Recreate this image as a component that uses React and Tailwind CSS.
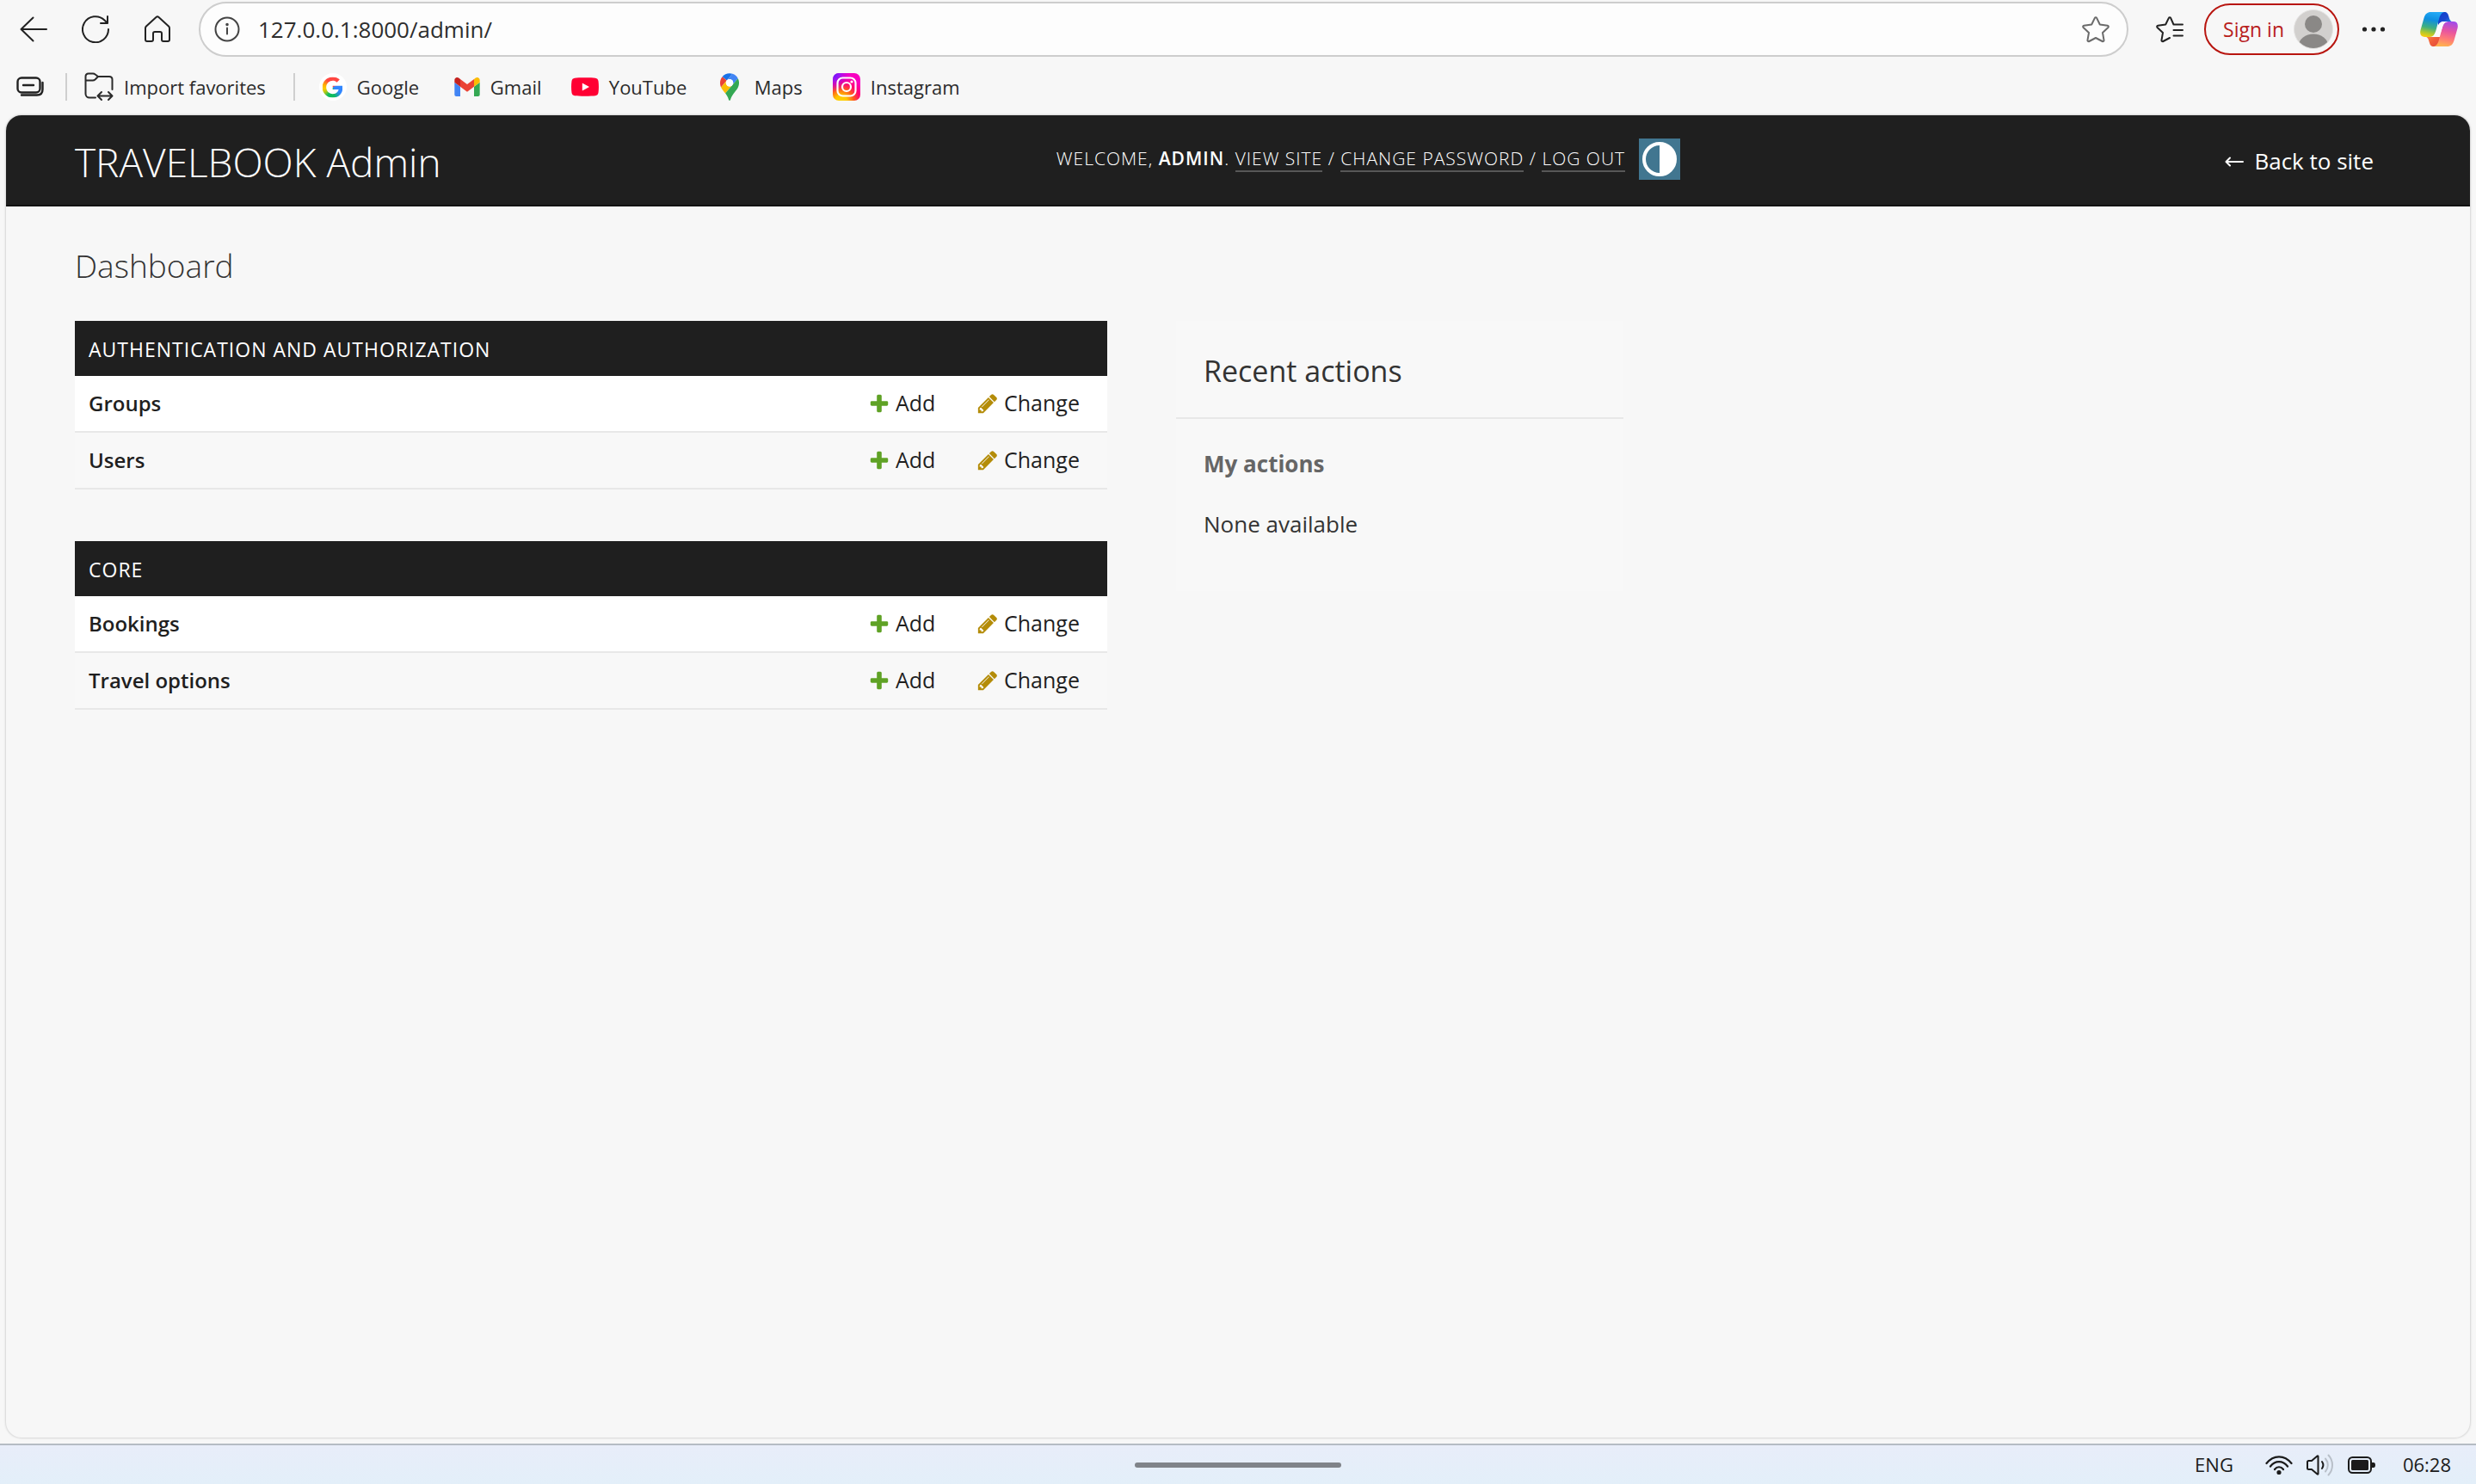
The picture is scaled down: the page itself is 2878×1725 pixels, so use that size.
import React from "react";

function Stroke({ className, children, box = "0 0 32 32", width = 2 }) {
  return (
    <svg viewBox={box} className={className} fill="none" stroke="currentColor" strokeWidth={width} strokeLinecap="round" strokeLinejoin="round" aria-hidden="true">
      {children}
    </svg>
  );
}

const STAR = "M16 2.2c.5 0 .9.3 1.1.7l3.7 7.6 8.9 1.3c1.1.2 1.5 1.4.7 2.2L24 20l1.5 8.6c.2 1.1-.9 1.9-1.9 1.4L16 26l-7.600 4c-1 .5-2.100-.3-1.900-1.400L8 20l-6.400-6c-.8-.8-.4-2 .7-2.200l8.900-1.300L14.900 2.900c.2-.4.6-.7 1.100-.7z";

function GoogleIcon() {
  return (
    <span className="flex size-8 items-center justify-center rounded-full bg-white">
      <svg viewBox="0 0 488 512" className="size-[25px]" aria-hidden="true">
        <clipPath id="google-g">
          <path d="M488 261.800C488 403.300 391.100 504 248 504 110.800 504 0 393.200 0 256S110.800 8 248 8c66.800 0 123 24.500 166.300 64.900l-67.500 64.900C258.500 52.600 94.300 116.600 94.300 256c0 86.500 69.100 156.600 153.700 156.600 98.200 0 135-70.400 140.800-106.900H248v-85.300h236.100c2.300 12.700 3.900 24.900 3.900 41.400z" />
        </clipPath>
        <g clipPath="url(#google-g)">
          <foreignObject width="488" height="512">
            <div className="h-[512px] w-[488px] bg-[conic-gradient(#ff4641_0deg,#ff4641_50deg,#3186ff_75deg,#3186ff_125deg,#0ebc5f_170deg,#0ebc5f_210deg,#a8c81c_235deg,#ffcc00_260deg,#ffb400_285deg,#ff4641_325deg,#ff4641_360deg)]" />
          </foreignObject>
        </g>
      </svg>
    </span>
  );
}

function GmailIcon() {
  return (
    <svg viewBox="52 42 88 66" className="h-[22px] w-[30px]" aria-hidden="true">
      <path fill="#4285f4" d="M58 108h14V74L52 59v43c0 3.320 2.690 6 6 6" />
      <path fill="#34a853" d="M120 108h14c3.320 0 6-2.690 6-6V59l-20 15" />
      <path fill="#fbbc04" d="M120 48v26l20-15v-8c0-7.420-8.470-11.650-14.400-7.200" />
      <path fill="#ea4335" d="M72 74V48l24 18 24-18v26L96 92" />
      <path fill="#c5221f" d="M52 51v8l20 15V48l-5.600-4.200c-5.940-4.450-14.400-.22-14.400 7.200" />
    </svg>
  );
}

function YouTubeIcon() {
  return (
    <svg viewBox="0 0 32 22" className="h-[22px] w-8" aria-hidden="true">
      <path fill="#ff0033" d="M4 .8C8 .2 24 .2 28 .8c2 .3 3.200 1.500 3.500 3.500.6 4 .6 9.400 0 13.400-.3 2-1.500 3.200-3.500 3.500-4 .6-20 .6-24 0-2-.3-3.200-1.500-3.500-3.500-.6-4-.6-9.400 0-13.400C.8 2.300 2 1.100 4 .8z" />
      <path fill="#fff" d="M12.800 6.500v9l8.200-4.500z" />
    </svg>
  );
}

function MapsIcon() {
  return (
    <svg viewBox="0 0 92.300 132.300" className="h-8 w-[22px]" aria-hidden="true">
      <path fill="#1a73e8" d="M60.200 2.200C55.800.8 51 0 46.100 0 32 0 19.300 6.400 10.800 16.500l21.800 18.300L60.200 2.200z" />
      <path fill="#ea4335" d="M10.800 16.500C4.100 24.500 0 34.900 0 46.100c0 8.700 1.700 15.700 4.600 22l28-33.300-21.800-18.300z" />
      <path fill="#4285f4" d="M46.200 28.500c9.800 0 17.700 7.900 17.700 17.700 0 4.300-1.600 8.300-4.200 11.400 0 0 13.900-16.600 27.500-32.700-5.600-10.800-15.300-19-27-22.700L32.600 34.800c3.300-3.800 8.100-6.300 13.600-6.300" />
      <path fill="#fbbc04" d="M46.200 63.800c-9.800 0-17.700-7.900-17.700-17.700 0-4.300 1.500-8.300 4.100-11.300l-28 33.300c4.800 10.600 12.800 19.200 21 29.900l34.100-40.500c-3.300 3.900-8.100 6.300-13.500 6.300" />
      <path fill="#34a853" d="M59.100 109.200c15.400-24.100 33.300-35 33.300-63 0-7.700-1.900-14.900-5.200-21.300L25.600 98c2.600 3.400 5.300 7.300 7.900 11.300 9.400 14.500 6.800 23.100 12.800 23.100s3.400-8.700 12.800-23.200" />
      <circle cx="46.200" cy="46.200" r="17.700" fill="#fff" />
    </svg>
  );
}

function InstagramIcon() {
  return (
    <svg viewBox="0 0 32 32" className="size-8" aria-hidden="true">
      <defs>
        <radialGradient id="ig-warm" cx="0.300" cy="1.050" r="0.950">
          <stop offset="0" stopColor="#ffd600" />
          <stop offset="0.250" stopColor="#ffc400" />
          <stop offset="0.500" stopColor="#ff5a1c" />
          <stop offset="0.750" stopColor="#ff0076" />
          <stop offset="1" stopColor="#f800c0" />
        </radialGradient>
        <radialGradient id="ig-cool" cx="0" cy="0" r="0.700">
          <stop offset="0" stopColor="#4a1cff" />
          <stop offset="0.350" stopColor="#8a18ff" stopOpacity="0.850" />
          <stop offset="1" stopColor="#d300e0" stopOpacity="0" />
        </radialGradient>
      </defs>
      <rect width="32" height="32" rx="7" fill="url(#ig-warm)" />
      <rect width="32" height="32" rx="7" fill="url(#ig-cool)" />
      <g fill="none" stroke="#fff" strokeWidth="2.200">
        <rect x="5.500" y="5.500" width="21" height="21" rx="6" />
        <circle cx="16" cy="16" r="5" />
      </g>
      <circle cx="22" cy="10" r="1.600" fill="#fff" />
    </svg>
  );
}

function CopilotIcon() {
  const front = "M12.500 0H28C24.500 1 23 4 22 8l-3.500 13c-1.300 5-3.500 8-7.500 8H5.500C1 29-.6 26 .5 21L4.500 7C6 2 8.500 0 12.500 0z";
  const fold = "M25.500 0h2.500c3.500 0 4.500 2 5.300 5 .9 3.500 2 6 4.200 6H28c-3.500 0-5.500 1.500-6.800 4.500L20.500 11l1.500-6C22.700 2 24 .4 25.500 0z";
  return (
    <svg viewBox="0 0 44 40" className="h-10 w-11" aria-hidden="true">
      <defs>
        <linearGradient id="cp-cool" x1="0.500" y1="0" x2="0.300" y2="1">
          <stop offset="0" stopColor="#22a8f5" />
          <stop offset="0.300" stopColor="#0f8fe0" />
          <stop offset="0.620" stopColor="#3fb080" />
          <stop offset="0.850" stopColor="#b5c92a" />
          <stop offset="1" stopColor="#f5cc10" />
        </linearGradient>
        <linearGradient id="cp-warm" x1="0.300" y1="1" x2="0.500" y2="0">
          <stop offset="0" stopColor="#a14bea" />
          <stop offset="0.400" stopColor="#e8559f" />
          <stop offset="0.700" stopColor="#ff7a78" />
          <stop offset="1" stopColor="#ffb050" />
        </linearGradient>
        <linearGradient id="cp-navy" x1="0" y1="0" x2="1" y2="1">
          <stop offset="0" stopColor="#0a3fc8" />
          <stop offset="0.500" stopColor="#1a46cf" />
          <stop offset="1" stopColor="#1ea0f0" />
        </linearGradient>
        <linearGradient id="cp-red" x1="0" y1="0" x2="1" y2="1">
          <stop offset="0" stopColor="#e0463c" />
          <stop offset="0.500" stopColor="#f2603a" />
          <stop offset="1" stopColor="#ff9a4a" />
        </linearGradient>
      </defs>
      <path d={fold} fill="url(#cp-navy)" />
      <path d={fold} fill="url(#cp-red)" transform="rotate(180 22 20)" />
      <path d="M26 11h8l-8 18H15z" fill="#fff" />
      <path d={front} fill="url(#cp-cool)" />
      <path d={front} fill="url(#cp-warm)" transform="rotate(180 22 20)" />
      <path d="M28 11h4c-3.500.5-5 3-5.800 6l-2.200 7c-1 3.200-3 5-6.500 5h-4.500c3.500-.5 5.200-3.500 6-7l1.800-6C22 13 24 11 28 11z" fill="#fbfbfb" />
    </svg>
  );
}

function AddIcon() {
  return (
    <svg viewBox="0 0 1792 1792" className="size-[26px] shrink-0" fill="#5fa225" aria-hidden="true">
      <path d="M1600 796v192q0 40-28 68t-68 28h-416v416q0 40-28 68t-68 28h-192q-40 0-68-28t-28-68v-416h-416q-40 0-68-28t-28-68v-192q0-40 28-68t68-28h416v-416q0-40 28-68t68-28h192q40 0 68 28t28 68v416h416q40 0 68 28t28 68z" />
    </svg>
  );
}

function ChangeIcon() {
  return (
    <svg viewBox="0 0 1792 1792" className="size-[26px] shrink-0" fill="#b48c08" aria-hidden="true">
      <path d="M491 1536l91-91-235-235-91 91v107h128v128h107zm523-928q0-22-22-22-10 0-17 7l-542 542q-7 7-7 17 0 22 22 22 10 0 17-7l542-542q7-7 7-17zm-54-192l416 416-832 832h-416v-416zm683 96q0 53-37 90l-166 166-416-416 166-165q36-38 90-38 53 0 91 38l235 234q37 39 37 91z" />
    </svg>
  );
}

function Toolbar() {
  return (
    <div className="flex h-[68px] items-center pr-[21px] pl-[23px]">
      <button aria-label="Back" className="mr-10">
        <Stroke className="size-8">
          <path d="M31 16H1.500M15.500 2.500L1.500 16l14 13.500" />
        </Stroke>
      </button>
      <button aria-label="Refresh" className="mr-10">
        <Stroke className="size-8">
          <path d="M31 16A15 15 0 1 1 26.500 5.500L30 9M30 1v8h-8" />
        </Stroke>
      </button>
      <button aria-label="Home" className="mr-8">
        <Stroke className="size-8">
          <path d="M3 12.500L14.500 2c.9-.8 2.100-.8 3 0L29 12.500c.6.600 1 1.300 1 2.200V28c0 1.200-.8 2-2 2h-5c-1.200 0-2-.8-2-2v-7c0-1.200-.8-2-2-2h-6c-1.200 0-2 .8-2 2v7c0 1.200-.8 2-2 2H4c-1.200 0-2-.8-2-2V14.700c0-.9.400-1.600 1-2.200z" />
        </Stroke>
      </button>
      <div className="flex h-16 flex-1 items-center rounded-full border-2 border-[#cdcdcd] bg-[#fdfdfd] pr-5 pl-4">
        <button aria-label="Site information" className="text-[#444]">
          <Stroke className="size-[30px]" box="0 0 30 30">
            <circle cx="15" cy="15" r="13.500" />
            <path d="M15 13.500v7" />
            <circle cx="15" cy="9.500" r="0.800" fill="currentColor" />
          </Stroke>
        </button>
        <input aria-label="Address" defaultValue="127.0.0.1:8000/admin/" className="ml-[21px] min-w-0 flex-1 bg-transparent text-[26px] leading-9 text-[#2e2e2e] outline-none" />
        <button aria-label="Add to favorites" className="text-[#6b6b6b]">
          <Stroke className="size-8"><path d={STAR} /></Stroke>
        </button>
      </div>
      <button aria-label="Favorites" className="ml-8">
        <Stroke className="size-8">
          <path d="M20.500 10.500L17.100 2.900c-.4-.9-1.800-.9-2.200 0l-3.700 7.600-8.900 1.300c-1.100.2-1.500 1.400-.7 2.200L8 20l-1.500 8.600c-.2 1.100.9 1.900 1.900 1.400L16 26M20.500 10.500H31M20.500 17H31M20.500 23.500H31" />
        </Stroke>
      </button>
      <button className="ml-6 flex h-[60px] items-center gap-[11px] rounded-full border-2 border-[#b8150f] pr-[5px] pl-5 text-[23px] text-[#b8201c]">
        Sign in
        <svg viewBox="0 0 46 46" className="size-[46px]" aria-hidden="true">
          <clipPath id="avatar"><circle cx="23" cy="23" r="22" /></clipPath>
          <circle cx="23" cy="23" r="22.500" fill="#d2d0ce" stroke="#e4e3e2" />
          <g clipPath="url(#avatar)" fill="#8a8886">
            <circle cx="23" cy="17" r="10" />
            <ellipse cx="23" cy="42" rx="17" ry="13.500" />
          </g>
        </svg>
      </button>
      <button aria-label="Settings and more" className="ml-[26px]">
        <svg viewBox="0 0 28 8" className="h-2 w-7" fill="currentColor" aria-hidden="true">
          <circle cx="3.500" cy="4" r="2.600" />
          <circle cx="14" cy="4" r="2.600" />
          <circle cx="24.500" cy="4" r="2.600" />
        </svg>
      </button>
      <button aria-label="Copilot" className="ml-10"><CopilotIcon /></button>
    </div>
  );
}

function Favorite({ icon, label, className }) {
  return <a href="#" className={"flex items-center " + className}>{icon}{label}</a>;
}

function FavoritesBar() {
  return (
    <nav aria-label="Favorites bar" className="flex h-[66px] items-center pl-[19px] text-[22px] text-[#2b2b2b]">
      <button aria-label="Hide favorites bar" className="text-[#222]">
        <Stroke className="h-6 w-8" box="0 0 32 24" width={2.4}>
          <rect x="1.500" y="1.500" width="26" height="17" rx="4.500" />
          <path d="M8 10h12" />
          <path d="M6 21.500h18c4 0 6.500-2.500 6.500-6.500V7" />
        </Stroke>
      </button>
      <span className="mr-5 ml-[25px] h-8 w-0.5 bg-[#cfcfcf]" />
      <button className="flex items-center gap-3">
        <Stroke className="size-[34px]" box="0 0 34 34">
          <path d="M13 29.500H6c-2.500 0-4.500-2-4.500-4.500V5C1.500 3 3 1.500 5 1.500h5c1 0 2 .4 2.700 1L16 5h13c2 0 3.500 1.500 3.500 3.500V20M1.500 9.500h8.300c1 0 2-.4 2.700-1L16 5" />
          <path d="M16 27.500h16M20 23l-4.500 4.500L20 32M28 23l4.500 4.500L28 32" />
        </Stroke>
        Import favorites
      </button>
      <span className="ml-8 h-8 w-0.5 bg-[#cfcfcf]" />
      <Favorite className="ml-7 w-[157px] gap-3" icon={<GoogleIcon />} label="Google" />
      <Favorite className="w-[136px] gap-3" icon={<GmailIcon />} label="Gmail" />
      <Favorite className="w-[173px] gap-3" icon={<YouTubeIcon />} label="YouTube" />
      <Favorite className="w-[131px] gap-[18px]" icon={<MapsIcon />} label="Maps" />
      <Favorite className="gap-3" icon={<InstagramIcon />} label="Instagram" />
    </nav>
  );
}

const navLink = "border-b-2 border-white/25";

function AdminHeader() {
  return (
    <header className="flex h-[106px] items-center justify-between border-b-2 border-[#121212] bg-[#1f1f1f] pt-[3px] pr-[112px] pl-20 text-white">
      <div className="flex max-w-[1866px] flex-1 items-center justify-between">
        <h1 className="text-[46px] leading-[60px] font-light"><a href="#">TRAVELBOOK Admin</a></h1>
        <div className="flex items-center gap-4 pb-[5px]">
          <p className="text-[21px] font-light tracking-[1px] uppercase">
            Welcome, <strong className="font-semibold">admin</strong>. <a href="#" className={navLink}>View site</a> / <a href="#" className={navLink}>Change password</a> / <a href="#" className={navLink}>Log out</a>
          </p>
          <button aria-label="Toggle theme" className="flex size-12 items-center justify-center bg-[#417690]">
            <svg viewBox="0 0 40 40" className="size-10" aria-hidden="true">
              <circle cx="20" cy="20" r="18" fill="none" stroke="#fff" strokeWidth="4" />
              <path d="M20 2a18 18 0 0 1 0 36z" fill="#fff" />
            </svg>
          </button>
        </div>
      </div>
      <a href="#" className="flex items-center gap-3 text-[26px]">
        <Stroke className="h-3 w-[22px]" box="0 0 22 12">
          <path d="M21 6H2M6 1.500L1.500 6 6 10.500" />
        </Stroke>
        Back to site
      </a>
    </header>
  );
}

const apps = [
  { name: "Authentication and Authorization", models: ["Groups", "Users"] },
  { name: "Core", models: ["Bookings", "Travel options"] },
];

function AppModule({ app }) {
  return (
    <table className="mb-[60px] w-full table-fixed border-separate border-spacing-0 text-[25px] text-[#1f1f1f]">
      <caption className="h-16 bg-[#1f1f1f] px-4 text-left text-[23px] leading-[66px] tracking-[1px] text-white uppercase">
        <a href="#">{app.name}</a>
      </caption>
      <colgroup>
        <col />
        <col className="w-[126px]" />
        <col className="w-[152px]" />
      </colgroup>
      <tbody>
        {app.models.map((model) => (
          <tr key={model} className="odd:bg-white even:bg-[#f8f8f8]">
            <th scope="row" className="h-[66px] border-b-2 border-[#e8e8e8] px-4 text-left text-2xl font-semibold"><a href="#">{model}</a></th>
            <td className="border-b-2 border-[#e8e8e8]"><a href="#" className="flex items-center gap-1.5"><AddIcon />Add</a></td>
            <td className="border-b-2 border-[#e8e8e8]"><a href="#" className="flex items-center gap-1.5"><ChangeIcon />Change</a></td>
          </tr>
        ))}
      </tbody>
    </table>
  );
}

function RecentActions() {
  return (
    <aside className="h-[314px] w-[520px] bg-[#f8f8f8] text-[26px] text-[#333]">
      <h2 className="border-b-2 border-[#e8e8e8] px-8 pt-[34px] pb-[30px] text-[34px] leading-[48px]">Recent actions</h2>
      <h3 className="px-8 pt-[31px] leading-[42px] font-bold text-[#666]">My actions</h3>
      <p className="px-8 pt-7 leading-[42px]">None available</p>
    </aside>
  );
}

function Taskbar() {
  return (
    <footer className="grid h-[47px] grid-cols-[1fr_auto_1fr] items-center border-t-2 border-[#b5bcc3] bg-linear-to-b from-[#e8edf9] to-[#e3eff9] text-[22px] text-[#1b1b1b]">
      <span />
      <span className="h-1.5 w-60 rounded-full bg-[#7f8389]" />
      <div className="flex items-center justify-end pr-[29px]">
        <span className="mr-[37px]">ENG</span>
        <Stroke className="mr-4 h-6 w-8" box="0 0 32 24" width={2.2}>
          <path d="M1.500 10C9.500-.3 22.500-.3 30.500 10M6 13.500c5.500-7.300 14.500-7.300 20 0M11 17c2.800-3.700 7.200-3.700 10 0" />
          <circle cx="16" cy="20.500" r="1.500" fill="currentColor" />
        </Stroke>
        <Stroke className="mr-4 h-7 w-8" box="0 0 32 28">
          <path d="M1 10.500v7c0 .8.500 1.500 1.500 1.500H6l6.500 5.500c.5.400 1 .1 1-.5V4c0-.6-.5-.9-1-.5L6 9H2.500C1.500 9 1 9.700 1 10.500zM18 10c1.800 2.500 1.800 5.500 0 8" />
          <path d="M22 6.500c3.700 4.500 3.700 10.500 0 15M25.500 2.500c6 6.500 6 16.500 0 23" stroke="#b9c0c9" />
        </Stroke>
        <svg viewBox="0 0 32 20" className="mr-8 h-5 w-8" aria-hidden="true">
          <rect x="1" y="1" width="26" height="18" rx="4.500" fill="none" stroke="#1b1b1b" strokeWidth="2" />
          <rect x="4" y="4" width="20" height="12" rx="1.500" fill="#1b1b1b" />
          <path d="M28 7h2c1.200 0 2 1 2 3s-.8 3-2 3h-2z" fill="#1b1b1b" />
        </svg>
        <time>06:28</time>
      </div>
    </footer>
  );
}

export default function App() {
  return (
    <div className="flex min-h-screen flex-col bg-[#f7f7f7] font-['Open_Sans','Noto_Sans',sans-serif] text-[#222]">
      <Toolbar />
      <FavoritesBar />
      <div className="mx-[7px] mb-[7px] flex flex-1 flex-col overflow-hidden rounded-[18px] shadow-[0_0_2px_1px_#d6d6d6]">
        <AdminHeader />
        <main className="flex-1 px-20 pt-10">
          <h2 className="mb-[35px] text-[37px] leading-[58px] font-light text-[#333]">Dashboard</h2>
          <div className="flex items-start gap-20">
            <div className="w-[1200px]">
              {apps.map((app) => <AppModule key={app.name} app={app} />)}
            </div>
            <RecentActions />
          </div>
        </main>
      </div>
      <Taskbar />
    </div>
  );
}
